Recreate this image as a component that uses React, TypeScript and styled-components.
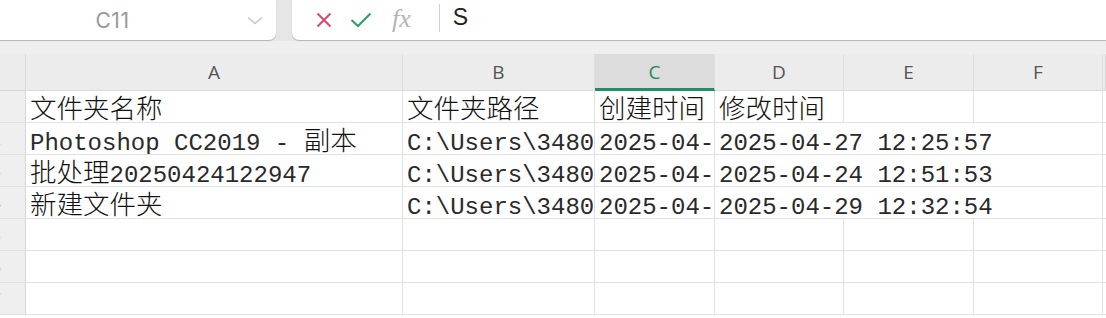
import React from 'react';
import styled, { createGlobalStyle } from 'styled-components';

const GlobalStyle = createGlobalStyle`
  html, body {
    margin: 0;
    padding: 0;
    background: #efefef;
    overflow: hidden;
  }
  #root {
    width: 1106px;
    height: 318px;
    overflow: hidden;
  }
`;

const Page = styled.div`
  display: flex;
  flex-direction: column;
  width: 1106px;
  height: 318px;
  background: #efefef;
`;

const TopBar = styled.div`
  display: flex;
  height: 41px;
  gap: 16px;
  background: #e6e6e6;
`;

const NameBox = styled.div`
  display: flex;
  align-items: center;
  width: 276px;
  height: 40px;
  background: #fff;
  border-bottom-right-radius: 7px;
  box-shadow: 0 1px 1px rgba(0, 0, 0, 0.22);
`;

const NameText = styled.div`
  width: 225px;
  text-align: center;
  font-family: Inter, 'Open Sans', sans-serif;
  font-size: 21px;
  color: #979797;
  letter-spacing: 0.5px;
  padding-top: 1px;
`;

const Chevron = styled.div`
  display: flex;
  flex: 1;
  justify-content: center;
  padding-left: 8px;
`;

const FormulaBox = styled.div`
  display: flex;
  align-items: center;
  flex: 1;
  height: 40px;
  background: #fff;
  border-bottom-left-radius: 7px;
  box-shadow: 0 1px 1px rgba(0, 0, 0, 0.22);
  padding-left: 24px;
`;

const IconSlot = styled.div<{ $w: number }>`
  display: flex;
  align-items: center;
  justify-content: center;
  width: ${(p) => p.$w}px;
  height: 40px;
`;

const Fx = styled.span`
  font-family: 'Liberation Serif', serif;
  font-style: italic;
  font-size: 26px;
  color: #b4b4b4;
  margin-left: 2px;
  padding-bottom: 3px;
`;

const Divider = styled.div`
  width: 1px;
  height: 28px;
  background: #cfcfcf;
  margin: 0 13px 4px 28px;
`;

const FormulaText = styled.span`
  font-family: 'Liberation Sans', Arial, sans-serif;
  font-size: 23px;
  color: #222;
  padding-bottom: 5px;
`;

const Sheet = styled.div`
  display: grid;
  grid-template-columns: 26px 377px 192px 120px 129px 130px 129px 1fr;
  grid-auto-rows: 32px;
  grid-template-rows: 37px;
  margin-top: 13px;
  background: #fff;
  flex: 1;
`;

const Corner = styled.div`
  background: #ececec;
  border-right: 1px solid #d9d9d9;
  border-bottom: 1px solid #d9d9d9;
`;

const ColHead = styled.div<{ $active?: boolean }>`
  display: flex;
  align-items: center;
  justify-content: center;
  background: ${(p) => (p.$active ? '#dcdcdc' : '#ececec')};
  border-right: 1px solid #dedede;
  border-bottom: ${(p) => (p.$active ? '3px solid #1f9160' : '1px solid #d9d9d9')};
  font-family: 'Open Sans', 'Noto Sans', sans-serif;
  font-size: 19px;
  color: ${(p) => (p.$active ? '#1f8a5a' : '#555')};
  padding-top: ${(p) => (p.$active ? '2px' : '0')};
`;

const RowHead = styled.div`
  display: flex;
  align-items: center;
  justify-content: flex-end;
  padding-right: 24px;
  overflow: hidden;
  background: #efefef;
  border-right: 1px solid #d6d6d6;
  border-bottom: 1px solid #e2e2e2;
  font-family: 'Open Sans', sans-serif;
  font-size: 17px;
  color: #8fb4d6;
`;

const Cell = styled.div<{ $span?: number }>`
  grid-column: span ${(p) => p.$span ?? 1};
  display: flex;
  align-items: flex-end;
  padding: 0 0 0 4px;
  overflow: hidden;
  white-space: pre;
  border-right: 1px solid #e1e1e1;
  border-bottom: 1px solid #e1e1e1;
  font-family: 'Liberation Mono', 'Noto Sans CJK SC', monospace;
  font-size: 24px;
  line-height: 20px;
  color: #2a2a2a;
`;

const CellText = styled.span`
  display: block;
`;

const Han = styled.span`
  font-family: 'Noto Sans CJK SC', sans-serif;
  font-size: 26.5px;
  font-weight: 300;
  color: #111;
`;

const Filler = styled.div`
  border-bottom: 1px solid #e1e1e1;
`;

type CellData = { text?: string; span?: number };

const rows: CellData[][] = [
  [{ text: '文件夹名称' }, { text: '文件夹路径' }, { text: '创建时间' }, { text: '修改时间' }, {}, {}],
  [
    { text: 'Photoshop CC2019 - 副本' },
    { text: 'C:\\Users\\34801\\Desktop\\Photoshop CC2019 - 副本' },
    { text: '2025-04-24 12:25:57' },
    { text: '2025-04-27 12:25:57', span: 3 },
  ],
  [
    { text: '批处理20250424122947' },
    { text: 'C:\\Users\\34801\\Desktop\\批处理20250424122947' },
    { text: '2025-04-24 12:29:47' },
    { text: '2025-04-24 12:51:53', span: 3 },
  ],
  [
    { text: '新建文件夹' },
    { text: 'C:\\Users\\34801\\Desktop\\新建文件夹' },
    { text: '2025-04-29 12:32:54' },
    { text: '2025-04-29 12:32:54', span: 3 },
  ],
  [{}, {}, {}, {}, {}, {}],
  [{}, {}, {}, {}, {}, {}],
  [{}, {}, {}, {}, {}, {}],
];

const columns = ['A', 'B', 'C', 'D', 'E', 'F'];

// wrap CJK runs so they get the wider Han font
function renderText(text: string) {
  const parts = text.split(/([\u3000-\u9fff\uff00-\uffef]+)/);
  return parts.map((part, i) =>
    /[\u3000-\u9fff\uff00-\uffef]/.test(part) ? <Han key={i}>{part}</Han> : part,
  );
}

export default function App() {
  return (
    <>
      <GlobalStyle />
      <Page>
        <TopBar>
          <NameBox>
            <NameText>C11</NameText>
            <Chevron>
              <svg width="16" height="9" viewBox="0 0 16 9">
                <path d="M1 1.5 L8 7.5 L15 1.5" fill="none" stroke="#c4c4c4" strokeWidth="1.4" />
              </svg>
            </Chevron>
          </NameBox>
          <FormulaBox>
            <IconSlot $w={16}>
              <svg width="16" height="16" viewBox="0 0 16 16">
                <path d="M1.5 1.5 L14.5 14.5 M14.5 1.5 L1.5 14.5" stroke="#d9486a" strokeWidth="2" />
              </svg>
            </IconSlot>
            <IconSlot $w={58}>
              <svg width="22" height="16" viewBox="0 0 22 16">
                <path d="M1.5 8 L8 14 L20.5 1.5" fill="none" stroke="#2f9a64" strokeWidth="2" />
              </svg>
            </IconSlot>
            <Fx>fx</Fx>
            <Divider />
            <FormulaText>S</FormulaText>
          </FormulaBox>
        </TopBar>
        <Sheet>
          <Corner />
          {columns.map((c) => (
            <ColHead key={c} $active={c === 'C'}>
              {c}
            </ColHead>
          ))}
          <Corner />
          {rows.map((row, r) => (
            <React.Fragment key={r}>
              <RowHead>{r + 1}</RowHead>
              {row.map((cell, i) => (
                <Cell key={i} $span={cell.span}>
                  {cell.text ? <CellText>{renderText(cell.text)}</CellText> : null}
                </Cell>
              ))}
              <Filler />
            </React.Fragment>
          ))}
        </Sheet>
      </Page>
    </>
  );
}
